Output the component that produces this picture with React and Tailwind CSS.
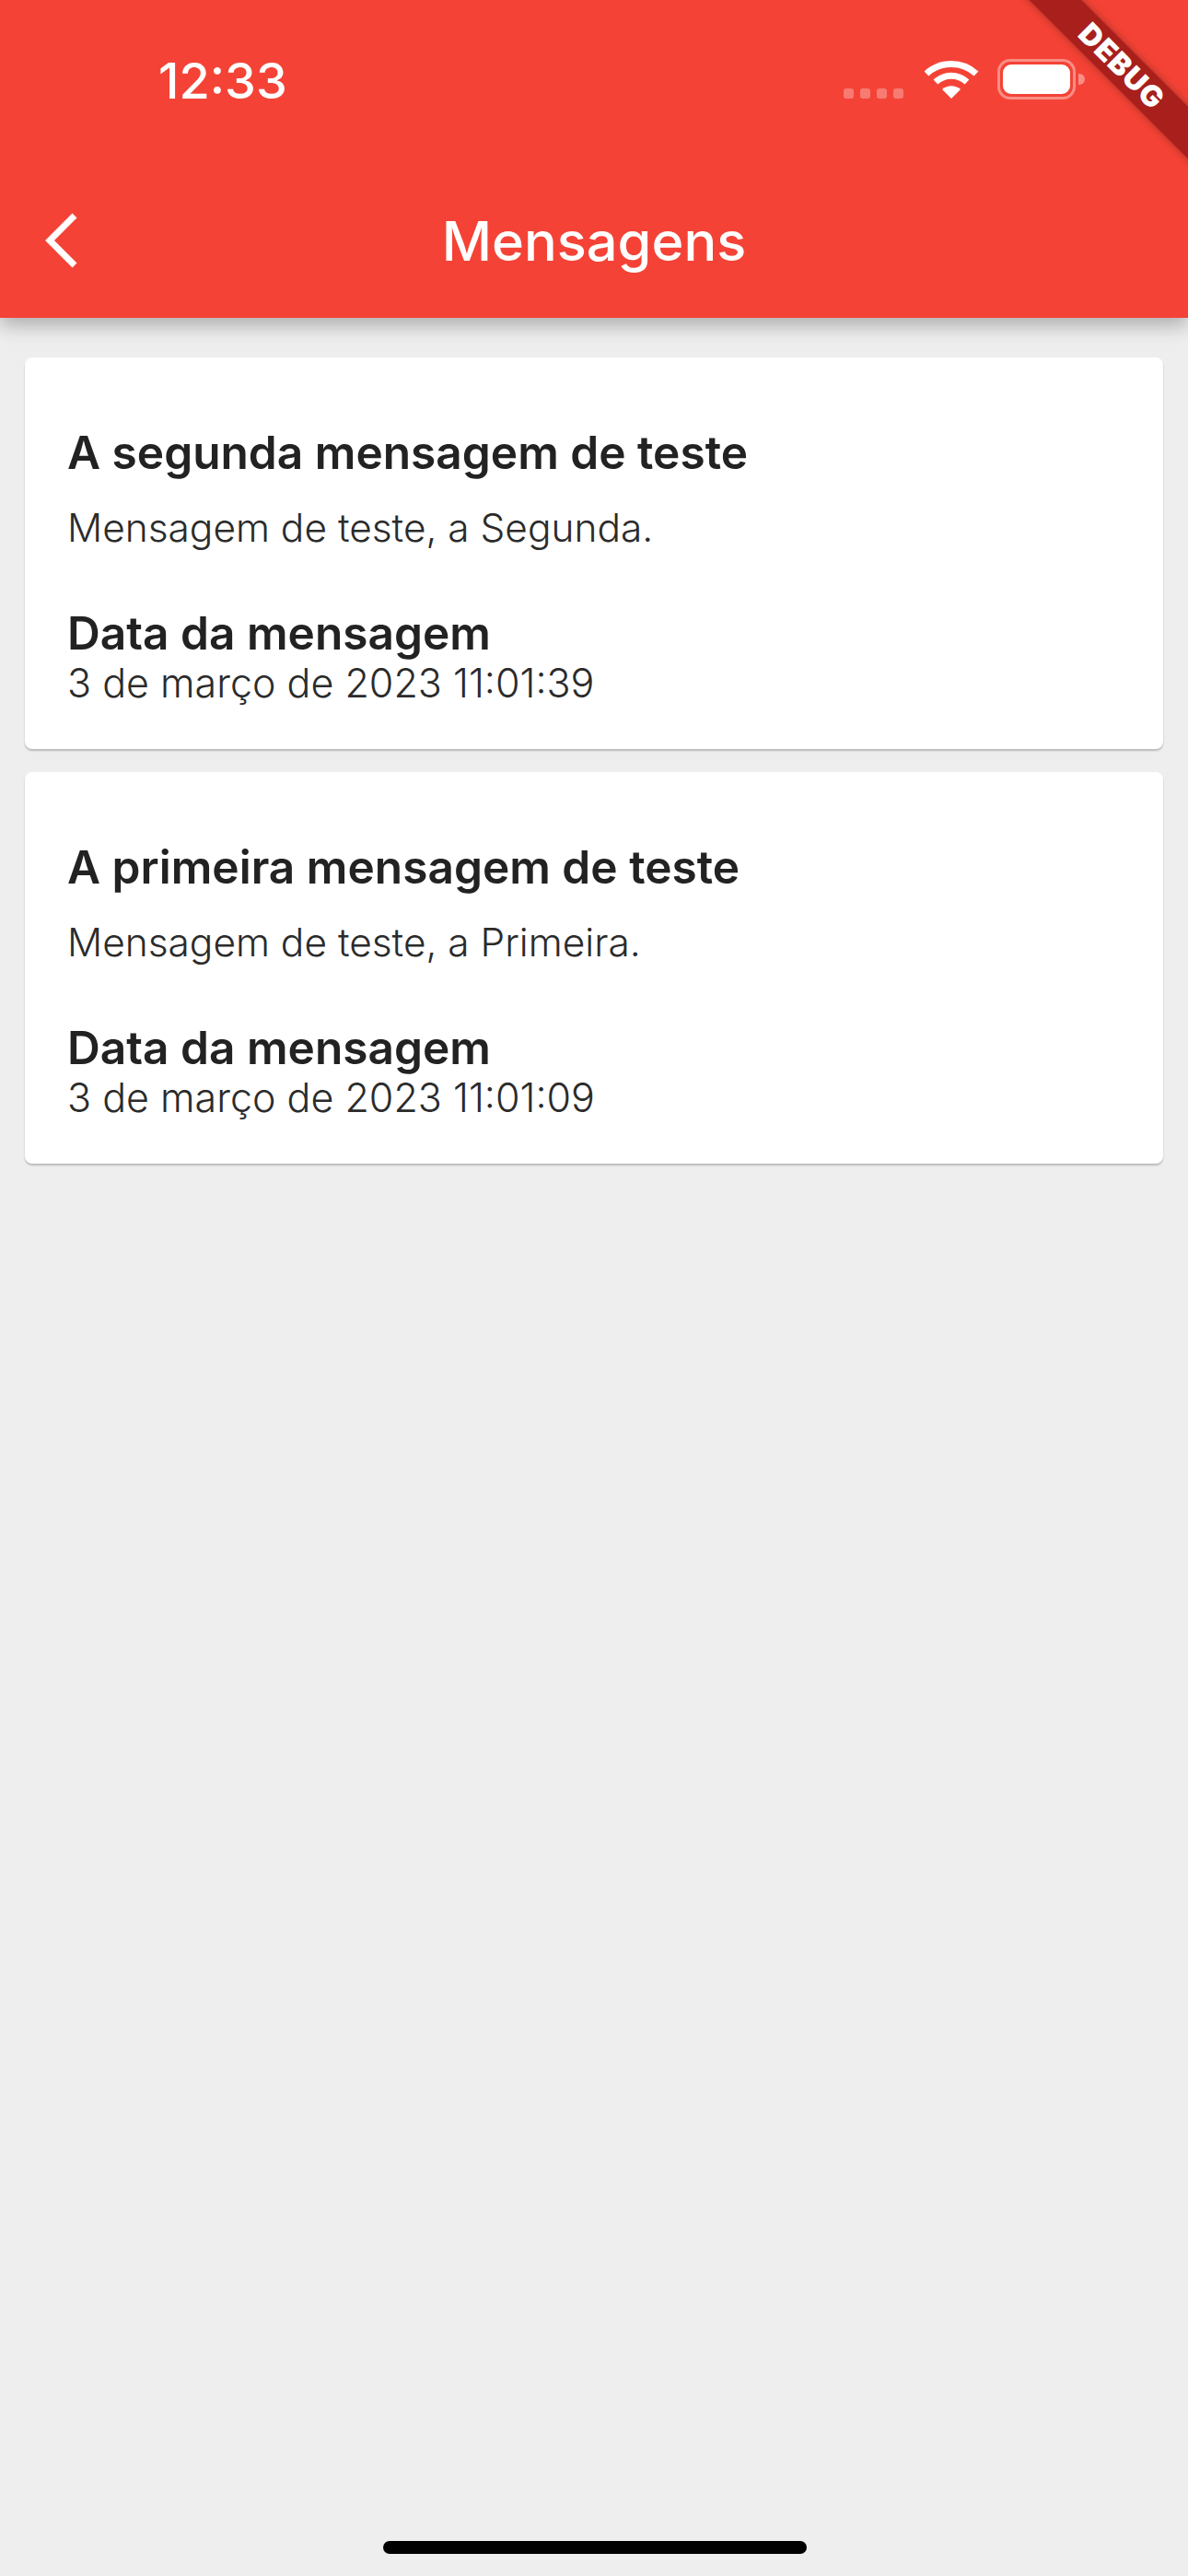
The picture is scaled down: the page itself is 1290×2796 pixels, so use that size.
const messages = [
  { title: "A segunda mensagem de teste", body: "Mensagem de teste, a Segunda.", date: "3 de março de 2023 11:01:39" },
  { title: "A primeira mensagem de teste", body: "Mensagem de teste, a Primeira.", date: "3 de março de 2023 11:01:09" },
];

function StatusIcons() {
  return (
    <div className="flex items-center">
      <div className="flex gap-[7px] mt-[30px] mr-[22px]">
        <span className="w-[11px] h-[11px] rounded-[3px] bg-white/30" />
        <span className="w-[11px] h-[11px] rounded-[3px] bg-white/30" />
        <span className="w-[11px] h-[11px] rounded-[3px] bg-white/30" />
        <span className="w-[11px] h-[11px] rounded-[3px] bg-white/30" />
      </div>
      <svg width="60" height="44" viewBox="0 0 60 44" fill="none" className="mr-[20px]">
        <path d="M3 16 C18 2 42 2 57 16" stroke="white" strokeWidth="7" />
        <path d="M13 25 C23 16 37 16 47 25" stroke="white" strokeWidth="7" />
        <path d="M30 43 L20 33 C26 28 34 28 40 33 Z" fill="white" />
      </svg>
      <div className="w-[85px] h-[44px] rounded-[14px] border-[3px] border-white/40 p-[3px]">
        <div className="w-full h-full rounded-[9px] bg-white" />
      </div>
      <div className="w-[7px] h-[12px] ml-[3px] rounded-r-full bg-white/40" />
    </div>
  );
}

function MessageCard({ title, body, date }) {
  return (
    <div className="h-[425px] rounded-[8px] bg-white px-[46px] pt-[78px] shadow-[0_2px_2px_rgba(0,0,0,0.22)]">
      <h2 className="text-[49.6px] leading-[50px] font-semibold text-[#222222]">{title}</h2>
      <p className="mt-[32px] text-[42.4px] leading-[50px] font-light text-[#2b2b2b]">{body}</p>
      <h3 className="mt-[64px] text-[49.6px] leading-[50px] font-semibold text-[#222222]">Data da mensagem</h3>
      <p className="mt-[4px] text-[43px] leading-[50px] font-light text-[#2b2b2b]">{date}</p>
    </div>
  );
}

export default function App() {
  return (
    <div className="relative w-[1290px] h-[2796px] overflow-hidden bg-[#eeeeee] font-['Inter',sans-serif]">
      <header className="relative z-10 h-[345px] bg-[#f44336] shadow-[0_8px_20px_rgba(0,0,0,0.28)] text-white">
        <div className="flex justify-between h-[176px] pt-[58px] pl-[172px] pr-[112px]">
          <span className="text-[54px] leading-[60px] font-medium">12:33</span>
          <div className="mt-[6px] h-[44px]"><StatusIcons /></div>
        </div>
        <div className="relative flex items-center justify-center h-[169px]">
          <svg width="36" height="60" viewBox="0 0 36 60" fill="none" className="absolute left-[48px] top-[55px]">
            <path d="M33 3 L6 30 L33 57" stroke="white" strokeWidth="7" />
          </svg>
          <h1 className="text-[59.5px] leading-[68px] font-medium">Mensagens</h1>
        </div>
      </header>

      <main className="flex flex-col gap-[25px] pt-[43px] px-[27px]">
        {messages.map((m) => (
          <MessageCard key={m.date} {...m} />
        ))}
      </main>

      {/* debug banner */}
      <div className="absolute z-20 top-[52px] right-[-98px] w-[340px] h-[40px] rotate-45 flex items-center justify-center bg-[#a81f1b] shadow-[0_0_10px_rgba(0,0,0,0.3)]">
        <span className="text-[32px] leading-[40px] font-black tracking-[1px] text-white">DEBUG</span>
      </div>

      <div className="absolute bottom-[24px] left-[416px] w-[460px] h-[14px] rounded-full bg-black" />
    </div>
  );
}
